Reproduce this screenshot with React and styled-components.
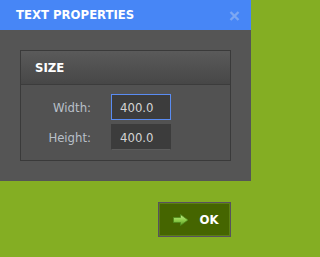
import React from 'react';
import styled, { createGlobalStyle } from 'styled-components';

const GlobalStyle = createGlobalStyle`
  html, body {
    margin: 0;
    padding: 0;
    background: #84ae23;
  }
  body {
    font-family: "DejaVu Sans Condensed", "DejaVu Sans", sans-serif;
    font-stretch: condensed;
  }
`;

const Dialog = styled.div`
  width: 251px;
  height: 257px;
  display: flex;
  flex-direction: column;
  background: #84ae23;
`;

const TitleBar = styled.div`
  height: 30px;
  display: flex;
  align-items: center;
  justify-content: space-between;
  padding: 0 11px 0 16px;
  background: #4786f6;
  box-sizing: border-box;
`;

const Title = styled.div`
  color: #ffffff;
  font-size: 13px;
  font-weight: bold;
  line-height: 30px;
`;

const CloseButton = styled.button`
  width: 11px;
  height: 10px;
  padding: 0;
  border: 0;
  background: none;
  display: flex;
  margin-top: 2px;
`;

const Body = styled.div`
  background: #555555;
  padding: 20px;
`;

const Panel = styled.section`
  border: 1px solid #3a3a3a;
  background: #525252;
`;

const PanelHeader = styled.div`
  height: 33px;
  display: flex;
  align-items: center;
  padding-left: 14px;
  border-bottom: 1px solid #3c3c3c;
  background: linear-gradient(#5a5a5a, #474747);
  color: #ffffff;
  font-size: 13px;
  font-weight: bold;
`;

const Fields = styled.div`
  display: grid;
  grid-template-columns: 70px 60px;
  column-gap: 20px;
  row-gap: 4px;
  align-items: center;
  padding: 9px 0 10px;
`;

const Label = styled.label`
  text-align: right;
  color: #b9c0c9;
  font-size: 13px;
`;

const Input = styled.input`
  box-sizing: border-box;
  width: 60px;
  height: 26px;
  padding: 0 0 0 8px;
  font-family: inherit;
  font-stretch: condensed;
  font-size: 13px;
  color: #d4d4d4;
  background: #3c3c3c;
  outline: none;
  border: 1px solid ${p => (p.$focused ? '#5a8cf2' : '#3c3c3c')};
  border-bottom-color: ${p => (p.$focused ? '#5a8cf2' : '#5c5c5c')};
`;

const Footer = styled.div`
  flex: 1;
  display: flex;
  justify-content: flex-end;
  align-items: flex-start;
  padding: 21px 20px 0;
`;

const OkButton = styled.button`
  box-sizing: border-box;
  width: 73px;
  height: 35px;
  display: flex;
  align-items: center;
  justify-content: center;
  gap: 10px;
  padding: 0 0 0 3px;
  background: #456500;
  border: 1px solid #57525e;
  box-shadow: inset 0 0 0 1px #5b7e14;
  color: #ffffff;
  font-family: inherit;
  font-stretch: condensed;
  font-size: 13px;
  font-weight: bold;
`;

function CloseIcon() {
  return (
    <svg width="11" height="10" viewBox="0 0 11 10">
      <path d="M1.5 1 L9.5 9 M9.5 1 L1.5 9" stroke="#7ca7f2" strokeWidth="2.4" />
    </svg>
  );
}

function ArrowIcon() {
  return (
    <svg width="16" height="12" viewBox="0 0 16 12">
      <defs>
        <linearGradient id="arrowFill" x1="0" y1="0" x2="0" y2="1">
          <stop offset="0" stopColor="#c4ec8a" />
          <stop offset="0.5" stopColor="#8fcf4c" />
          <stop offset="1" stopColor="#5c9a22" />
        </linearGradient>
      </defs>
      <path
        d="M0.5 3.5 H7.5 V0.5 L15 6 L7.5 11.5 V8.5 H0.5 Z"
        fill="url(#arrowFill)"
        stroke="#4f8a1c"
        strokeWidth="0.8"
      />
    </svg>
  );
}

export default function App() {
  return (
    <Dialog>
      <GlobalStyle />
      <TitleBar>
        <Title>TEXT PROPERTIES</Title>
        <CloseButton aria-label="Close">
          <CloseIcon />
        </CloseButton>
      </TitleBar>
      <Body>
        <Panel>
          <PanelHeader>SIZE</PanelHeader>
          <Fields>
            <Label>Width:</Label>
            <Input $focused defaultValue="400.0" />
            <Label>Height:</Label>
            <Input defaultValue="400.0" />
          </Fields>
        </Panel>
      </Body>
      <Footer>
        <OkButton>
          <ArrowIcon />
          OK
        </OkButton>
      </Footer>
    </Dialog>
  );
}
